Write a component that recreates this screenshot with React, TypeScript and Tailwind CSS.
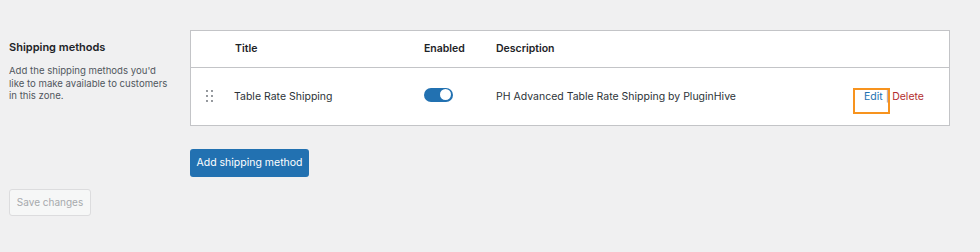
import React from 'react';

const DragHandle: React.FC = () => (
  <svg width="8" height="13" viewBox="0 0 8 13" className="text-[#646970]">
    {[1, 6].map((x) =>
      [1, 6, 11].map((y) => <circle key={`${x}-${y}`} cx={x} cy={y} r="0.9" fill="currentColor" />)
    )}
  </svg>
);

const Toggle: React.FC<{ on: boolean }> = ({ on }) => (
  <span className={`inline-flex h-[14px] w-[29px] items-center rounded-full px-[2px] ${on ? 'justify-end bg-[#2271b1]' : 'justify-start bg-[#dcdcde]'}`}>
    <span className="h-[11px] w-[11px] rounded-full bg-white" />
  </span>
);

const methods = [
  { title: 'Table Rate Shipping', enabled: true, description: 'PH Advanced Table Rate Shipping by PluginHive' },
];

export default function App() {
  return (
    <div className="h-[252px] w-[980px] bg-[#f0f0f1] pt-[30px] pl-[9px] font-['Inter',sans-serif] text-[10.5px] text-[#2c3338]">
      <div className="flex">
        <div className="w-[181px] pt-[9px]">
          <h3 className="text-[11px] font-semibold leading-[16px] text-[#1d2327]">Shipping methods</h3>
          <p className="mt-[10px] max-w-[160px] text-[9.6px] leading-[12.7px] text-[#50575e]">
            Add the shipping methods you'd like to make available to customers in this zone.
          </p>
        </div>

        <div className="w-[760px]">
          <div className="border border-[#c3c4c7] bg-white">
            <div className="grid h-[37px] grid-cols-[43px_190px_72px_1fr_auto] items-center border-b border-[#c3c4c7] font-semibold text-[#1d2327]">
              <div />
              <div className="pl-[1px]">Title</div>
              <div>Enabled</div>
              <div>Description</div>
              <div />
            </div>
            {methods.map((m) => (
              <div key={m.title} className="grid h-[57px] grid-cols-[43px_190px_72px_1fr_auto] items-center">
                <div className="flex pl-[15px]">
                  <DragHandle />
                </div>
                <div>{m.title}</div>
                <div>
                  <Toggle on={m.enabled} />
                </div>
                <div>{m.description}</div>
                <div className="relative pr-[25px] leading-[16px]">
                  <span className="text-[#2271b1]">Edit</span>
                  <span className="mx-[3px] text-[#8c8f94]">|</span>
                  <span className="text-[#b32d2e]">Delete</span>
                  <span className="pointer-events-none absolute top-[-1px] left-[-11px] h-[26px] w-[37px] border-2 border-[#f7931e]" />
                </div>
              </div>
            ))}
          </div>

          <button className="mt-[23px] h-[28px] w-[119px] rounded-[3px] bg-[#2271b1] text-[10.5px] text-white">
            Add shipping method
          </button>
        </div>
      </div>

      <button className="mt-[12px] h-[27px] w-[82px] rounded-[3px] border border-[#dcdcde] bg-[#f6f7f7] text-[10px] text-[#a7aaad]">
        Save changes
      </button>
    </div>
  );
}
